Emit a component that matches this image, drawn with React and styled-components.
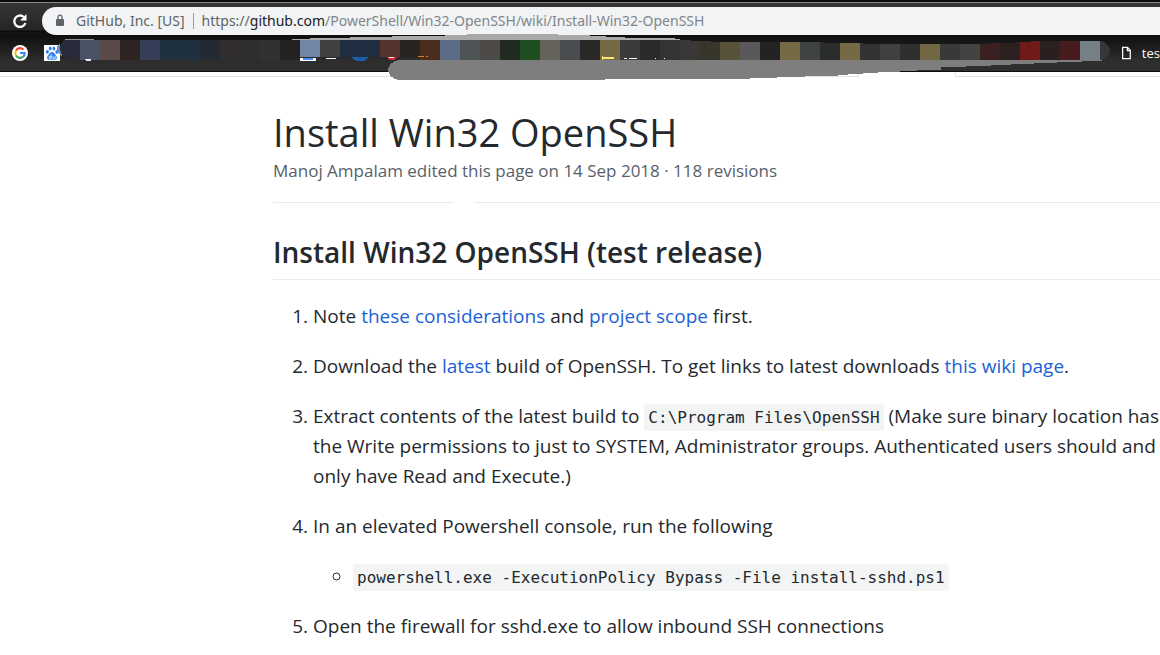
import React from "react";
import styled, { createGlobalStyle } from "styled-components";

const GlobalStyle = createGlobalStyle`
  *, *::before, *::after { box-sizing: border-box; }
  body {
    margin: 0;
    background: #fff;
    color: #24292e;
    font-family: "Open Sans", "Noto Sans", sans-serif;
    font-size: 19px;
    line-height: 30px;
    overflow-x: hidden;
  }
`;

const Browser = styled.header`
  position: relative;
  border-bottom: 1px solid #0c0c0c;
  background: #111;
`;

const Toolbar = styled.div`
  display: flex;
  align-items: stretch;
  height: 35px;
  padding-top: 4px;
  border-top: 2px solid #0b0b0b;
  background: linear-gradient(#868686 0 1px, #343434 1px, #262626 28px, #080808 29px, #111 30px);
`;

const ReloadButton = styled.button`
  display: flex;
  align-items: center;
  justify-content: center;
  width: 40px;
  margin-right: 2px;
  padding: 0;
  border: 0;
  background: none;
`;

const AddressBar = styled.div`
  display: flex;
  flex: 1;
  align-items: center;
  height: 28px;
  margin-top: 1px;
  padding-left: 13px;
  border-radius: 14px 0 0 14px;
  background: #f1f3f4;
  color: #5f6368;
  font-family: "Noto Sans", "Open Sans", sans-serif;
  font-size: 14px;
  line-height: 20px;
  white-space: nowrap;
`;

const SiteIdentity = styled.span`
  margin: 0 8px 0 11px;
  padding-right: 8px;
  border-right: 1px solid #9a9da1;
  line-height: 16px;
`;

const Url = styled.div`
  color: #80868b;
`;

const Scheme = styled.span`
  color: #5f6368;
`;

const Host = styled.span`
  color: #202124;
`;

const BookmarkBar = styled.nav`
  display: flex;
  align-items: center;
  gap: 16px;
  height: 36px;
  padding-left: 12px;
  overflow: hidden;
  background: linear-gradient(#0e0e0e, #2d2d2d 70%, #2f2f2f);
`;

const Bookmark = styled.a`
  display: flex;
  align-items: center;
  gap: 11px;
  color: #fff;
  font-size: 13px;
  line-height: 16px;
  text-decoration: none;
  white-space: nowrap;
`;

const LastBookmark = styled(Bookmark)`
  width: 38px;
  margin-left: auto;
`;

const Censor = styled.svg`
  position: absolute;
  top: 0;
  left: 0;
  pointer-events: none;
`;

const TopRule = styled.div`
  display: flex;
  justify-content: space-between;
  height: 5px;
`;

const RuleLeft = styled.div`
  flex: 0 0 859px;
  border-right: 1px solid #e1e4e8;
  border-bottom: 1px solid #e1e4e8;
`;

const RuleRight = styled.div`
  flex: 0 0 205px;
  border-left: 1px solid #e1e4e8;
  border-bottom: 1px solid #e1e4e8;
`;

const Page = styled.main`
  padding: 30px 0 0 273px;
`;

const Title = styled.h1`
  margin: 0;
  font-size: 38px;
  font-weight: 400;
  line-height: 50px;
`;

const Byline = styled.div`
  display: flex;
  color: #586069;
  font-size: 17px;
  line-height: 28px;
`;

const Divider = styled.div`
  display: flex;
  gap: 20px;
  margin-top: 17px;
`;

const DividerPart = styled.div`
  flex: ${({ $fill }) => ($fill ? "1" : "0 0 181px")};
  border-top: 1px solid #e6ebef;
`;

const Heading = styled.h2`
  margin: 30px 0 21px;
  padding-bottom: 7px;
  border-bottom: 1px solid #eaecef;
  font-size: 28px;
  font-weight: 600;
  line-height: 39px;
`;

const Steps = styled.ol`
  margin: 0;
  padding-left: 40px;
`;

const Step = styled.li`
  margin-bottom: 20px;
`;

const SubSteps = styled.ul`
  margin: 20px 0 0;
  padding-left: 40px;
  list-style-type: circle;
`;

const Link = styled.a`
  color: #1b62d6;
  text-decoration: none;
`;

const Code = styled.code`
  padding: 4px;
  border-radius: 3px;
  background: #f3f4f4;
  font-family: "DejaVu Sans Mono", monospace;
  font-size: 16px;
  line-height: 20px;
`;

const TILES = [
  [80, 20, "#4a5366"], [100, 20, "#5c4a4a"], [120, 20, "#2e2423"], [140, 20, "#353d57"],
  [160, 40, "#1f313e"], [200, 20, "#232a31"], [220, 20, "#322d31"], [240, 20, "#2e2e2e"],
  [260, 20, "#313131"], [280, 20, "#232323"], [300, 20, "#7385a5"], [320, 20, "#404040"],
  [340, 40, "#1f2e40"], [380, 20, "#54342f"], [400, 20, "#28241f"], [420, 20, "#4a2d1d"],
  [440, 20, "#5b6d87"], [460, 20, "#4e5356"], [480, 20, "#4e4a48"], [500, 20, "#222b22"],
  [520, 20, "#1f4f20"], [540, 20, "#66635b"], [560, 20, "#494d50"], [580, 20, "#2b2926"],
  [600, 20, "#766a45"], [620, 20, "#3c393d"], [640, 20, "#2a2a2a"], [660, 20, "#343434"],
  [680, 20, "#393836"], [700, 20, "#38352a"], [720, 20, "#59523b"], [740, 20, "#5b585c"],
  [760, 20, "#232323"], [780, 20, "#766a45"], [800, 20, "#3f4342"], [820, 20, "#2a2d2c"],
  [840, 20, "#766946"], [860, 20, "#333333"], [880, 20, "#40403f"], [900, 20, "#2f2f2d"],
  [920, 20, "#716742"], [940, 20, "#393a37"], [960, 20, "#454341"], [980, 20, "#3a2021"],
  [1000, 20, "#2d2021"], [1020, 20, "#701a1a"], [1040, 20, "#2b1f20"], [1060, 20, "#481b1d"],
  [1080, 20, "#768087"], [1100, 10, "#35383b"],
];

function CensoredBookmarks() {
  return (
    <Censor width="1112" height="82" viewBox="0 0 1112 82" aria-hidden="true" shapeRendering="crispEdges">
      <clipPath id="mosaic">
        <path d="M64 40H691V41H711V42H824V43H863V44H991V43H1016V42H1031V41H1100C1104 41 1110 46 1110 51S1104 60 1100 60H420V57H300V60H80V59H69C64 58 59 53 60 46Z" />
      </clipPath>
      <path d="M65 39h29v1H65z" fill="#8f8f8f" />
      <path d="M292 39H310V38H350V37H392V36H445V35H467V34H558V35H590V36H606V37H625V38H675V39H680V40H292Z" fill="#a8a9ab" />
      <path d="M60 43l-3 4v5l5 5z" fill="#6e8fb5" />
      <g clipPath="url(#mosaic)">
        <path d="M58 40h22v20H58z" fill="#282c3a" />
        {TILES.map(([x, width, color]) => (
          <rect key={x} x={x} y="40" width={width} height="20" fill={color} />
        ))}
      </g>
      <path d="M84 59h7v2h-5z" fill="#e8e8f5" />
      <path d="M300 58h16v3h-16z" fill="#fff" />
      <path d="M303 58h10v2h-10z" fill="#4b8ff0" />
      <path d="M326 58h10v1h-10z" fill="#f0eef6" />
      <path d="M352 57h16l-2 3-3 1h-6l-3-1z" fill="#1a5fa8" />
      <path d="M386 57h11l-3 3h-5z" fill="#d8242c" />
      <path d="M389 57h5v1h-5z" fill="#fff" />
      <path d="M418 56h6v1h-6zM426 56h2v1h-2z" fill="#e5791e" />
      <path d="M602 56h1v4h-1zM603 57h11v2h-11z" fill="#fce27a" />
      <path d="M624 58h3v1h-3zM629 58h8v1h-8zM655 58h1v1h-1zM664 58h1v1h-1z" fill="#fff" />
      <path
        d="M398 60H1102V61H1082V62H1057V63H1034V64H1011V65H991V66H966V67H941V70H917V71H900V72H878V73H863V74H848V75H838V76H805V77H777V78H750V79H605V80H398C393 79 388 75 388 70S393 61 398 60Z"
        fill="#7e7e7e"
      />
    </Censor>
  );
}

function ReloadIcon() {
  return (
    <svg width="16" height="16" viewBox="0 0 16 16" aria-hidden="true">
      <path d="M13.4 10A5.7 5.7 0 1 1 11.8 4" fill="none" stroke="#fff" strokeWidth="2.3" />
      <path d="M14.5 1v6.5H8z" fill="#fff" />
    </svg>
  );
}

function LockIcon() {
  return (
    <svg width="10" height="14" viewBox="0 0 10 14" aria-hidden="true">
      <rect x="1" y="5" width="8" height="7" rx="1" fill="#5f6368" />
      <path d="M3 5V3.2a2 2 0 0 1 4 0V5" fill="none" stroke="#5f6368" strokeWidth="1.3" />
    </svg>
  );
}

function GoogleIcon() {
  return (
    <svg width="16" height="16" viewBox="0 0 16 16" aria-hidden="true">
      <circle cx="8" cy="8" r="8" fill="#fff" />
      <g fill="none" strokeWidth="2.1">
        <path d="M11.5 4.6A4.7 4.7 0 0 0 4 5.5" stroke="#ea4335" />
        <path d="M4 5.5a4.8 4.8 0 0 0 0 5" stroke="#fbbc05" />
        <path d="M4 10.5a4.7 4.7 0 0 0 7 1.3" stroke="#34a853" />
        <path d="M8 8h4.7a4.7 4.7 0 0 1-1.7 3.8" stroke="#4285f4" />
      </g>
    </svg>
  );
}

function PawIcon() {
  return (
    <svg width="16" height="16" viewBox="0 0 16 16" aria-hidden="true">
      <path d="M0 0h16v16H0z" fill="#fff" />
      <g fill="#2f80ed">
        <ellipse cx="3.4" cy="6.8" rx="1.5" ry="1.9" />
        <ellipse cx="6.2" cy="3.4" rx="1.4" ry="2" />
        <ellipse cx="9.9" cy="3.4" rx="1.4" ry="2" />
        <ellipse cx="12.8" cy="6.9" rx="1.5" ry="1.9" />
        <path d="M8 7c1.9 0 2.4 1.8 3.8 3.2 1.7 1.7 1.4 4.5-1.1 4.5H5.3c-2.5 0-2.8-2.8-1.1-4.5C5.6 8.8 6.1 7 8 7z" />
      </g>
      <path d="M7.2 9.5v4.1H5.3v-2.2h1.9M9 11.2v2.4h2.2v-2.4" fill="none" stroke="#fff" strokeWidth="0.8" />
    </svg>
  );
}

function FileIcon() {
  return (
    <svg width="10" height="14" viewBox="0 0 10 14" aria-hidden="true">
      <path d="M.7.7h5.5L9.3 4v9.3H.7zM6 .7V4.2h3.3" fill="none" stroke="#fff" strokeWidth="1.4" />
    </svg>
  );
}

export default function App() {
  return (
    <>
      <GlobalStyle />
      <Browser>
        <Toolbar>
          <ReloadButton aria-label="Reload">
            <ReloadIcon />
          </ReloadButton>
          <AddressBar>
            <LockIcon />
            <SiteIdentity>GitHub, Inc. [US]</SiteIdentity>
            <Url>
              <Scheme>https://</Scheme>
              <Host>github.com</Host>
              /PowerShell/Win32-OpenSSH/wiki/Install-Win32-OpenSSH
            </Url>
          </AddressBar>
        </Toolbar>
        <BookmarkBar>
          <Bookmark href="#google" aria-label="Google">
            <GoogleIcon />
          </Bookmark>
          <Bookmark href="#baidu" aria-label="Baidu">
            <PawIcon />
          </Bookmark>
          <LastBookmark href="#test">
            <FileIcon />
            <span>tes</span>
          </LastBookmark>
        </BookmarkBar>
        <CensoredBookmarks />
      </Browser>
      <TopRule>
        <RuleLeft />
        <RuleRight />
      </TopRule>
      <Page>
        <Title>Install Win32 OpenSSH</Title>
        <Byline>Manoj Ampalam edited this page on 14 Sep 2018 · 118 revisions</Byline>
        <Divider>
          <DividerPart />
          <DividerPart $fill />
        </Divider>
        <Heading>Install Win32 OpenSSH (test release)</Heading>
        <Steps>
          <Step>
            Note <Link href="#considerations">these considerations</Link> and{" "}
            <Link href="#scope">project scope</Link> first.
          </Step>
          <Step>
            Download the <Link href="#latest">latest</Link> build of OpenSSH. To get links to latest
            downloads <Link href="#wiki">this wiki page</Link>.
          </Step>
          <Step>
            Extract contents of the latest build to <Code>C:\Program Files\OpenSSH</Code> (Make sure
            binary location has the Write permissions to just to SYSTEM, Administrator groups.
            Authenticated users should and only have Read and Execute.)
          </Step>
          <Step>
            In an elevated Powershell console, run the following
            <SubSteps>
              <li>
                <Code>powershell.exe -ExecutionPolicy Bypass -File install-sshd.ps1</Code>
              </li>
            </SubSteps>
          </Step>
          <Step>Open the firewall for sshd.exe to allow inbound SSH connections</Step>
        </Steps>
      </Page>
    </>
  );
}
